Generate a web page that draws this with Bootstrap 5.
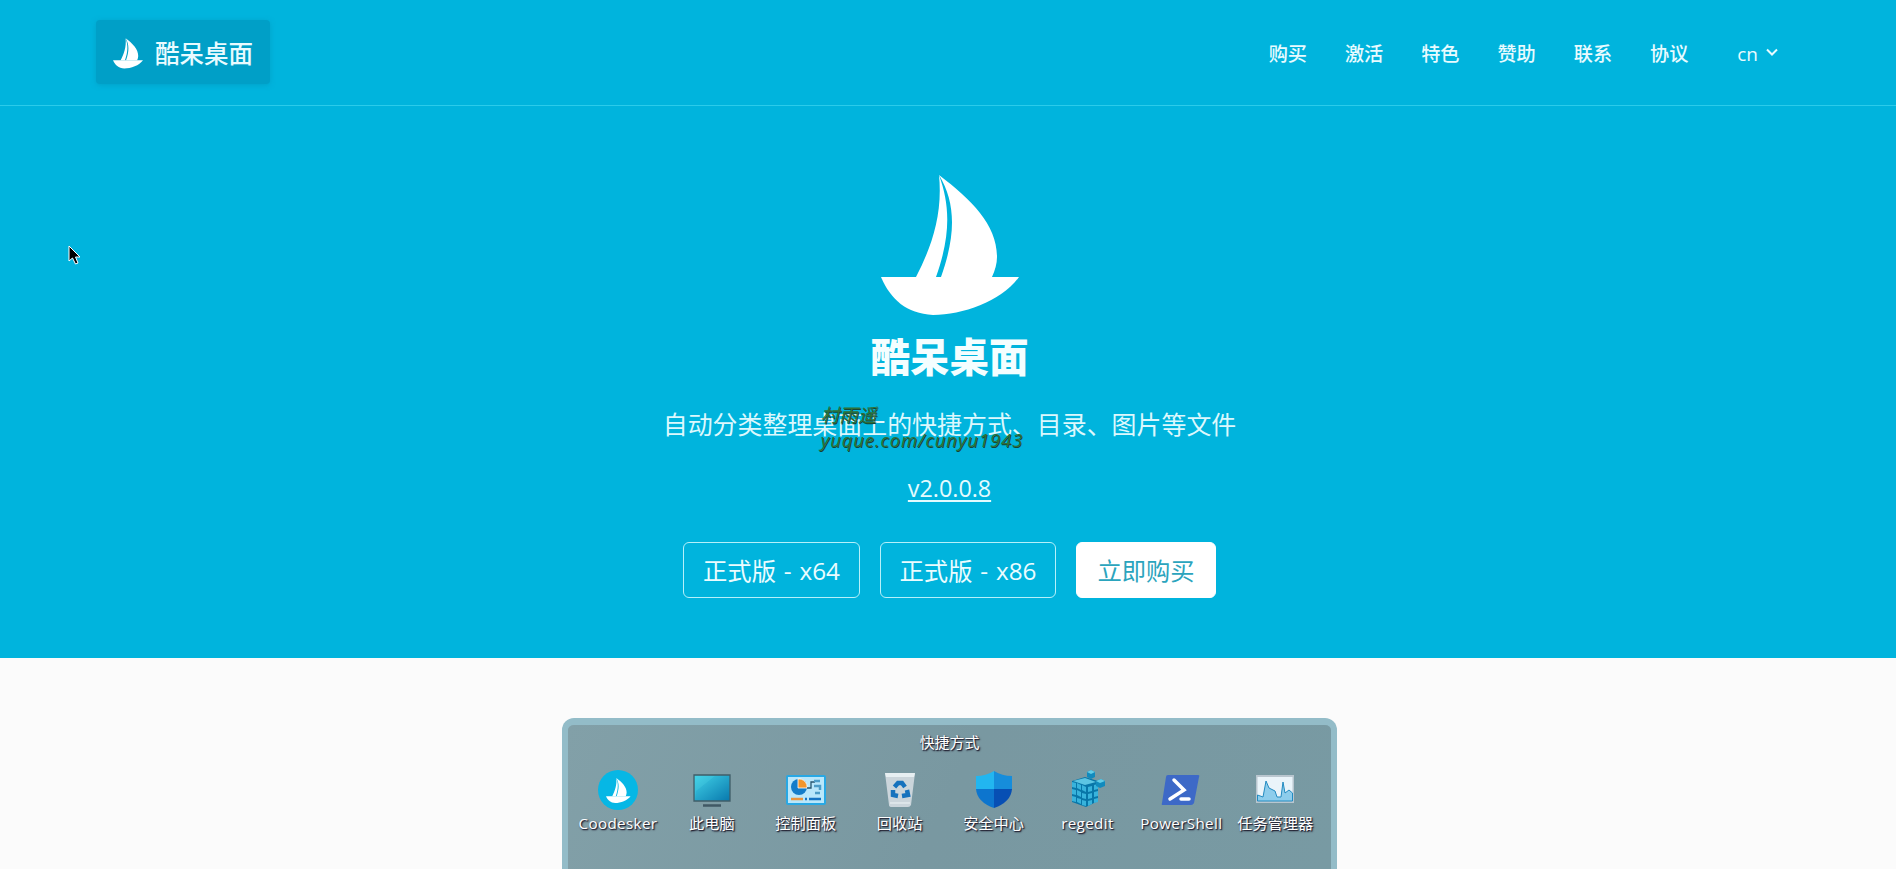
<!DOCTYPE html>
<html lang="zh-CN">
<head>
<meta charset="utf-8">
<meta name="viewport" content="width=device-width, initial-scale=1">
<title>酷呆桌面</title>
<link href="https://cdn.jsdelivr.net/npm/bootstrap@5.3.0/dist/css/bootstrap.min.css" rel="stylesheet">
<style>
body{font-family:"Open Sans","Noto Sans CJK SC",sans-serif;background:#fbfbfb;height:869px;overflow:hidden}
.hero{background:#00b4dd;height:658px;color:#f4feff}
.topbar{height:106px;border-bottom:1px solid #2bcbea;padding:0 118px 0 96px}
.brand-box{width:174px;height:64px;margin-bottom:1px;padding-left:17px;gap:12px;background:#009fc7;border-radius:4px;box-shadow:0 1px 5px #008fb580;font-size:24.5px;color:#e9fbff}
.brand-box span{padding-top:5px;font-weight:500}
.brand-box svg{margin-top:2px}
.brand-box:hover{color:#fff}
.menu{gap:37.9px;font-size:19.2px;font-weight:500;padding-top:2px}
.menu .nav-link{padding:0;color:#e8fbff;line-height:30px}
.menu .lang{margin-left:11px;font-weight:400;font-size:19px;line-height:28px}
.lang svg{margin-top:-3px}
.intro{padding-left:3px}
.hero h1{font-size:39.5px;line-height:48px;font-weight:900;margin:17px 0 0}
.boat{padding-top:69px;box-sizing:content-box}
.lead-text{font-size:24.95px;line-height:36px;margin:25px 0 0;color:#dcf8fd;white-space:nowrap}
.wm{left:158px;top:-5px;font-size:18.6px;line-height:25px;color:#2f7038;text-shadow:.7px .7px 0 #12443a;text-align:left;font-style:italic}
.wm span{display:block}
.wm span+span{letter-spacing:.85px}
.ver{font-size:23.3px;line-height:36px;margin-top:28px;color:#e4fbfe;text-underline-offset:3px;text-decoration-thickness:2px}
.acts{gap:20px;margin-top:36px}
.acts .btn{height:56px;font-size:24.3px;line-height:36px;padding:10px 0 8px;border-radius:6px;width:177px;color:#eafcff;border:1px solid #b5f0fa;word-spacing:1.5px}
.acts .btn+.btn{width:176px}
.acts .btn.buy{width:140px;background:#fff;color:#2ba4bd;border-color:#fff}
.fence-row{padding:60px 0 0 3px}
.fence{width:775px;height:151px;border:6px solid #93bcc8;border-top-width:7px;border-bottom:0;border-radius:12px 12px 0 0;background:linear-gradient(115deg,#82a0a8,#7998a1 50%,#789aa3);padding:4px 2px 0;color:#fff;text-shadow:1px 1px 1px #223,1px 1px 2px #334}
.fence-title{font-size:14.9px;line-height:26px}
.fence-items{padding-left:1px}
.fence-item{flex:0 0 93.9px;font-size:15.2px;line-height:24px;white-space:nowrap}
.latin{letter-spacing:.35px}
.fence-item svg{display:block;margin:15px auto 1px}
.pointer{left:68px;top:245px}
</style>
</head>
<body>
<svg width="0" height="0" class="position-absolute"><defs>
<g id="boat"><path d="M0 102H138C121 126 82 140 52 140C25 138 10 125 0 102Z"/><path d="M35 102C50 73 62 40 58 0C69 30 70 60 55 102Z"/><path d="M58 0C91 25 116 50 116 82C116 89 114 95 111 102H60C75 60 75 28 58 0Z"/></g>
</defs></svg>
<section class="hero text-center">
<nav class="topbar d-flex align-items-center justify-content-between">
<a class="brand-box d-flex align-items-center text-decoration-none" href="#"><svg width="30" height="31" viewBox="0 0 138 141" fill="#fff"><use href="#boat"/></svg><span>酷呆桌面</span></a>
<div class="menu nav align-items-center">
<a class="nav-link" href="#">购买</a><a class="nav-link" href="#">激活</a><a class="nav-link" href="#">特色</a><a class="nav-link" href="#">赞助</a><a class="nav-link" href="#">联系</a><a class="nav-link" href="#">协议</a>
<a class="nav-link lang d-flex align-items-center" href="#">cn<svg class="ms-2" width="12" height="9" viewBox="0 0 12 9" fill="none" stroke="#e8fbff" stroke-width="2"><path d="M1 1.5L6 6.5L11 1.5"/></svg></a>
</div>
</nav>
<div class="intro">
<svg class="boat d-block mx-auto" width="138" height="141" viewBox="0 0 138 141" fill="#fff"><use href="#boat"/></svg>
<h1>酷呆桌面</h1>
<p class="lead-text"><span class="position-relative">自动分类整理桌面上的快捷方式、目录、图片等文件<span class="wm position-absolute"><span>村雨遥</span><span>yuque.com/cunyu1943</span></span></span></p>
<div class="ver text-decoration-underline">v2.0.0.8</div>
<div class="acts d-flex justify-content-center"><a class="btn" href="#">正式版 - x64</a><a class="btn" href="#">正式版 - x86</a><a class="btn buy" href="#">立即购买</a></div>
</div>
</section>
<section class="fence-row">
<div class="fence mx-auto text-center">
<div class="fence-title">快捷方式</div>
<div class="fence-items d-flex">
<div class="fence-item latin"><svg width="40" height="40" viewBox="0 0 40 40"><circle cx="20" cy="20" r="20" fill="#06b7e5"/><use href="#boat" transform="translate(8 8) scale(.178)" fill="#fff"/></svg>Coodesker</div>
<div class="fence-item"><svg width="40" height="40" viewBox="0 0 40 40"><defs><linearGradient id="scr" x2="1" y2="1"><stop stop-color="#42d3e8"/><stop offset="1" stop-color="#0878ad"/></linearGradient></defs><path d="M2 5H38V31H2Z" fill="url(#scr)" stroke="#405e68" stroke-width="1.3"/><path d="M4 21L23 6H3V30Z" fill="#52d9e8" opacity=".25"/><path d="M11 35.5H29" stroke="#405965" stroke-width="2.5"/></svg>此电脑</div>
<div class="fence-item"><svg width="40" height="40" viewBox="0 0 40 40"><rect y="5" width="40" height="30" rx="2" fill="#28a8e4"/><rect x="2" y="7" width="36" height="26" fill="#b9e7fb"/><circle cx="13" cy="17" r="8" fill="#147dc9"/><path d="M12 9A8 8 0 0 1 21 18H12Z" fill="#f3962c" stroke="#fff" stroke-width=".8"/><path d="M21 18H25V12H29" stroke="#28566f" stroke-width="1.3" fill="none"/><path d="M28 11H34M28 16H34V20M29 23H34" stroke="#4d9dc8" stroke-width="2.5" fill="none"/><path d="M5 29H17" stroke="#e9953d" stroke-width="2.5"/><path d="M19 29H21M23 29H35" stroke="#1675c4" stroke-width="2.5"/></svg>控制面板</div>
<div class="fence-item"><svg width="40" height="40" viewBox="0 0 40 40"><path d="M5 3H35L31 35Q30 37 28 37H12Q9 37 9 35Z" fill="#cbd5db"/><path d="M5 3H35L34 7H6Z" fill="#e7eff2"/><path d="M10 33H30" stroke="#eef4f6"/><g fill="none" stroke="#1672bd" stroke-width="4.5"><path d="M14.5 17L18 13H22L25 17"/><path d="M27 20L28 25L22 26"/><path d="M18 26L13 25L13 20"/></g></svg>回收站</div>
<div class="fence-item"><svg width="40" height="40" viewBox="0 0 40 40"><path d="M20 1Q28 6 38 6V20H20Z" fill="#168ddb"/><path d="M20 1Q12 6 2 6V20H20Z" fill="#22b6f0"/><path d="M2 19H20V38Q3 32 2 19Z" fill="#0d75ce"/><path d="M20 19H38Q37 32 20 38Z" fill="#074fb4"/></svg>安全中心</div>
<div class="fence-item latin"><svg width="40" height="40" viewBox="0 0 40 40"><path d="M5 11L18 7L31 11V31L19 37L5 32Z" fill="#0876a8"/><g fill="#38b3dc"><path d="M5 12L9 13V18L5 17ZM10 13L14 15V20L10 18ZM15 15L19 17V22L15 20ZM5 19L9 20V25L5 24ZM10 20L14 22V27L10 25ZM15 23L19 24V29L15 28ZM5 26L9 27V32L5 31ZM10 28L14 29V34L10 32ZM15 30L19 31V36L15 35Z"/><path d="M21 17L25 16V21L21 22ZM27 15L31 14V19L27 20ZM21 24L25 23V28L21 29ZM27 22L31 21V26L27 27ZM21 31L25 30V34L21 36ZM27 29L31 28V32L27 33Z"/></g><path d="M6 11L18 8L29 12L18 15Z" fill="#5cc5e3"/><path d="M20 2L24 0L28 2V7L24 9L20 7ZM29 11L34 9L38 11V16L33 18L29 16Z" fill="#118abd"/><path d="M20 2L24 0L28 2L24 4ZM29 11L34 9L38 11L33 13Z" fill="#62cce7"/></svg>regedit</div>
<div class="fence-item latin"><svg width="40" height="40" viewBox="0 0 40 40"><path d="M7 5H37Q39 5 38 7L33 33Q32 35 30 35H2Q0 35 1 33L5 7Q5 5 7 5Z" fill="#3d69c7"/><path d="M13 10L23 20L9 29M20 29H28" fill="none" stroke="#fff" stroke-width="3.5" stroke-linecap="round"/></svg>PowerShell</div>
<div class="fence-item"><svg width="40" height="40" viewBox="0 0 40 40"><path d="M1 5H39V33H1Z" fill="#b9c6cf"/><path d="M2.5 7H37.5V31H2.5Z" fill="#eaf4fa"/><path d="M2.5 31V25L8 27L11 11L14 18L20 21L22 27L26 27L28 12L30 23L34 20L37.5 23V31Z" fill="#8dcdec" stroke="#238bc1"/></svg>任务管理器</div>
</div>
</div>
</section>
<svg class="pointer position-absolute" width="14" height="21" viewBox="0 0 14 21"><path d="M1 1V16L4.5 13L7.5 19L10 18L7.5 12H12Z" fill="#000" stroke="#fff" stroke-width="1"/></svg>
<script src="https://cdn.jsdelivr.net/npm/bootstrap@5.3.0/dist/js/bootstrap.bundle.min.js"></script>
</body>
</html>
